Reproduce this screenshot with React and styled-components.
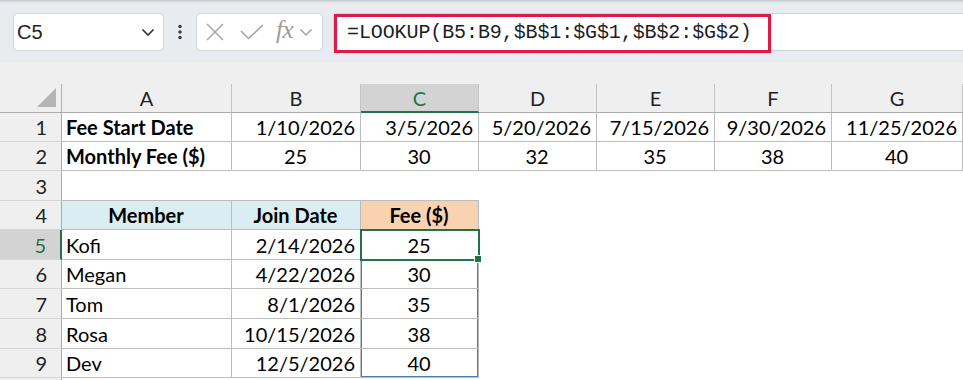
import styled, { createGlobalStyle } from "styled-components";

const GlobalStyle = createGlobalStyle`
  body {
    margin: 0;
    background: #efefef;
    font-family: Lato, "Liberation Sans", sans-serif;
    overflow: hidden;
  }
`;

const GREEN = "#217346";
const BLUE = "#4a7ebb";

const colWidths = [62, 170, 129, 118, 118, 118, 117, 131];
const rowHeights = [29, 29, 29, 30, 29, 30, 29, 30, 30, 29, 20];
const letters = ["A", "B", "C", "D", "E", "F", "G"];

const dates = ["1/10/2026", "3/5/2026", "5/20/2026", "7/15/2026", "9/30/2026", "11/25/2026"];
const fees = ["25", "30", "32", "35", "38", "40"];
const members = [
  ["Kofi", "2/14/2026", "25"],
  ["Megan", "4/22/2026", "30"],
  ["Tom", "8/1/2026", "35"],
  ["Rosa", "10/15/2026", "38"],
  ["Dev", "12/5/2026", "40"],
];

const App = () => {
  const rows = [];

  // row 1 and 2: lookup vectors
  rows.push([
    { text: "Fee Start Date", bold: true, align: "left", lines: true },
    ...dates.map((d) => ({ text: d, align: "right", lines: true })),
  ]);
  rows.push([
    { text: "Monthly Fee ($)", bold: true, align: "left", lines: true },
    ...fees.map((f) => ({ text: f, align: "center", lines: true })),
  ]);
  // row 3: blank, bottom line only under the table
  rows.push([0, 1, 2, 3, 4, 5, 6].map((i) => ({ text: "", bottom: i < 3 })));
  // row 4: table header
  rows.push([
    { text: "Member", bold: true, align: "center", lines: true, bg: "#daedf3" },
    { text: "Join Date", bold: true, align: "center", lines: true, bg: "#daedf3" },
    { text: "Fee ($)", bold: true, align: "center", lines: true, bg: "#f9d3b1" },
    {}, {}, {}, {},
  ]);
  members.forEach(([name, date, fee], i) => {
    rows.push([
      { text: name, align: "left", lines: true },
      { text: date, align: "right", lines: true },
      {
        text: fee,
        align: "center",
        lines: true,
        active: i === 0,
        range: i > 0,
        last: i === members.length - 1,
      },
      {}, {}, {}, {},
    ]);
  });
  rows.push([{}, {}, {}, {}, {}, {}, {}]);

  return (
    <>
      <GlobalStyle />
      <FormulaBar>
        <NameBox>
          <NameText>C5</NameText>
          <svg width="14" height="9" viewBox="0 0 14 9">
            <path d="M1.5 1.5 L7 7 L12.5 1.5" fill="none" stroke="#333" strokeWidth="1.6" />
          </svg>
        </NameBox>
        <Dots>
          <svg width="6" height="16" viewBox="0 0 6 16">
            <circle cx="3" cy="2.5" r="1.7" fill="#2e3a46" />
            <circle cx="3" cy="8" r="1.7" fill="#2e3a46" />
            <circle cx="3" cy="13.5" r="1.7" fill="#2e3a46" />
          </svg>
        </Dots>
        <FxBox>
          <svg width="20" height="20" viewBox="0 0 20 20">
            <path d="M2 2 L18 18 M18 2 L2 18" fill="none" stroke="#a3a3a3" strokeWidth="1.5" />
          </svg>
          <svg width="24" height="16" viewBox="0 0 24 16">
            <path d="M1 7 L8.5 14.5 L23 1" fill="none" stroke="#a3a3a3" strokeWidth="1.5" />
          </svg>
          <FxText>fx</FxText>
          <svg width="14" height="9" viewBox="0 0 14 9">
            <path d="M1.5 1.5 L7 7 L12.5 1.5" fill="none" stroke="#a3a3a3" strokeWidth="1.5" />
          </svg>
        </FxBox>
        <FormulaBox>
          <FormulaText>=LOOKUP(B5:B9,$B$1:$G$1,$B$2:$G$2)</FormulaText>
          <Highlight />
        </FormulaBox>
      </FormulaBar>

      <Sheet>
        <Corner>
          <svg width="20" height="20" viewBox="0 0 20 20">
            <polygon points="19,0 19,19 0,19" fill="#b5b5b5" />
          </svg>
        </Corner>
        {letters.map((l) => (
          <ColHeader key={l} $selected={l === "C"}>
            {l}
          </ColHeader>
        ))}
        {rows.map((cells, r) => (
          <Row key={r} cells={cells} index={r + 1} />
        ))}
      </Sheet>
    </>
  );
};

const Row = ({ cells, index }) => (
  <>
    <RowHeader $selected={index === 5}>{index <= 9 ? index : ""}</RowHeader>
    {cells.map((c, i) => (
      <Cell
        key={i}
        $align={c.align}
        $bold={c.bold}
        $bg={c.bg}
        $lines={c.lines}
        $bottom={c.bottom}
        $range={c.range}
        $last={c.last}
        $active={c.active}
      >
        {c.text}
        {c.active && <FillHandle />}
      </Cell>
    ))}
  </>
);

const FormulaBar = styled.div`
  display: flex;
  align-items: stretch;
  height: 38px;
  padding: 12px 0 11px 13px;
  background: #e8ecf0;
  border-top: 1px solid #c9cdd2;
  box-shadow: inset 0 2px 2px -1px #d2d6db;
`;

const NameBox = styled.div`
  width: 151px;
  box-sizing: border-box;
  display: flex;
  align-items: center;
  justify-content: space-between;
  padding: 0 8px 0 3px;
  background: #fff;
  border: 1px solid #d3d7dc;
  border-radius: 5px;
`;

const NameText = styled.span`
  font-family: "Liberation Sans", Arial, sans-serif;
  font-size: 20px;
  color: #222;
`;

const Dots = styled.div`
  width: 32px;
  display: flex;
  align-items: center;
  justify-content: center;
`;

const FxBox = styled.div`
  width: 127px;
  box-sizing: border-box;
  display: flex;
  align-items: center;
  padding: 0 4px 0 8px;
  background: #fff;
  border: 1px solid #d3d7dc;
  border-radius: 5px;

  svg:nth-child(2) {
    margin-left: 15px;
  }
`;

const FxText = styled.span`
  font-family: "Liberation Serif", "Times New Roman", serif;
  font-style: italic;
  font-size: 25px;
  color: #9b9b9b;
  margin: -4px 6px 0 12px;
  letter-spacing: -0.5px;
`;

const FormulaBox = styled.div`
  position: relative;
  flex: 1;
  margin-left: 10px;
  display: flex;
  align-items: center;
  padding-left: 13px;
  background: #fff;
  border: 1px solid #cfd3d8;
  border-right: none;
  border-radius: 5px 0 0 5px;
`;

const FormulaText = styled.span`
  font-family: "Liberation Mono", "DejaVu Sans Mono", monospace;
  font-size: 20px;
  letter-spacing: -0.1px;
  color: #1e1e1e;
  padding-top: 1px;
`;

const Highlight = styled.div`
  position: absolute;
  left: 0;
  top: 0;
  width: 437px;
  height: 39px;
  box-sizing: border-box;
  border: 3px solid #dd1a48;
`;

const Sheet = styled.div`
  display: grid;
  grid-template-columns: ${colWidths.map((w) => w + "px").join(" ")};
  grid-template-rows: ${rowHeights.map((h) => h + "px").join(" ")};
  margin-top: 22px;
  font-size: 20px;
  color: #000;
`;

const Corner = styled.div`
  display: flex;
  align-items: flex-end;
  justify-content: flex-end;
  padding: 0 4px 4px 0;
  border-right: 1px solid #b3b3b3;
  border-bottom: 1px solid #ababab;
  box-sizing: border-box;
`;

const ColHeader = styled.div`
  display: flex;
  align-items: center;
  justify-content: center;
  box-sizing: border-box;
  background: ${({ $selected }) => ($selected ? "#d3d3d3" : "#efefef")};
  color: ${({ $selected }) => ($selected ? GREEN : "#222")};
  border-right: 1px solid #c4c4c4;
  border-bottom: ${({ $selected }) => ($selected ? `2px solid ${GREEN}` : "1px solid #ababab")};
  padding-top: ${({ $selected }) => ($selected ? "1px" : "0")};
`;

const RowHeader = styled.div`
  display: flex;
  align-items: center;
  justify-content: flex-end;
  padding-right: 14px;
  box-sizing: border-box;
  background: ${({ $selected }) => ($selected ? "#d3d3d3" : "#efefef")};
  color: ${({ $selected }) => ($selected ? GREEN : "#222")};
  border-right: ${({ $selected }) => ($selected ? `2px solid ${GREEN}` : "1px solid #ababab")};
  border-bottom: 1px solid #d6d6d6;
`;

const Cell = styled.div`
  position: relative;
  display: flex;
  align-items: center;
  justify-content: ${({ $align }) =>
    $align === "right" ? "flex-end" : $align === "center" ? "center" : "flex-start"};
  padding: 0 5px 0 4px;
  box-sizing: border-box;
  white-space: nowrap;
  font-weight: ${({ $bold }) => ($bold ? 700 : 400)};
  background: ${({ $bg }) => $bg || "#fff"};
  border-right: ${({ $lines }) => ($lines ? "1px solid #bdbdbd" : "none")};
  border-bottom: ${({ $lines, $bottom }) => ($lines || $bottom ? "1px solid #bdbdbd" : "none")};
  box-shadow: ${({ $range, $last }) =>
    $range
      ? `inset 1px 0 0 ${BLUE}, inset -1px 0 0 ${BLUE}${$last ? `, inset 0 -1px 0 ${BLUE}` : ""}`
      : "none"};
  outline: ${({ $active }) => ($active ? `2px solid ${GREEN}` : "none")};
  outline-offset: -1px;
  z-index: ${({ $active }) => ($active ? 2 : "auto")};
`;

const FillHandle = styled.div`
  position: absolute;
  right: -4px;
  bottom: -4px;
  width: 6px;
  height: 6px;
  background: ${GREEN};
  border: 1px solid #fff;
`;

export default App;
